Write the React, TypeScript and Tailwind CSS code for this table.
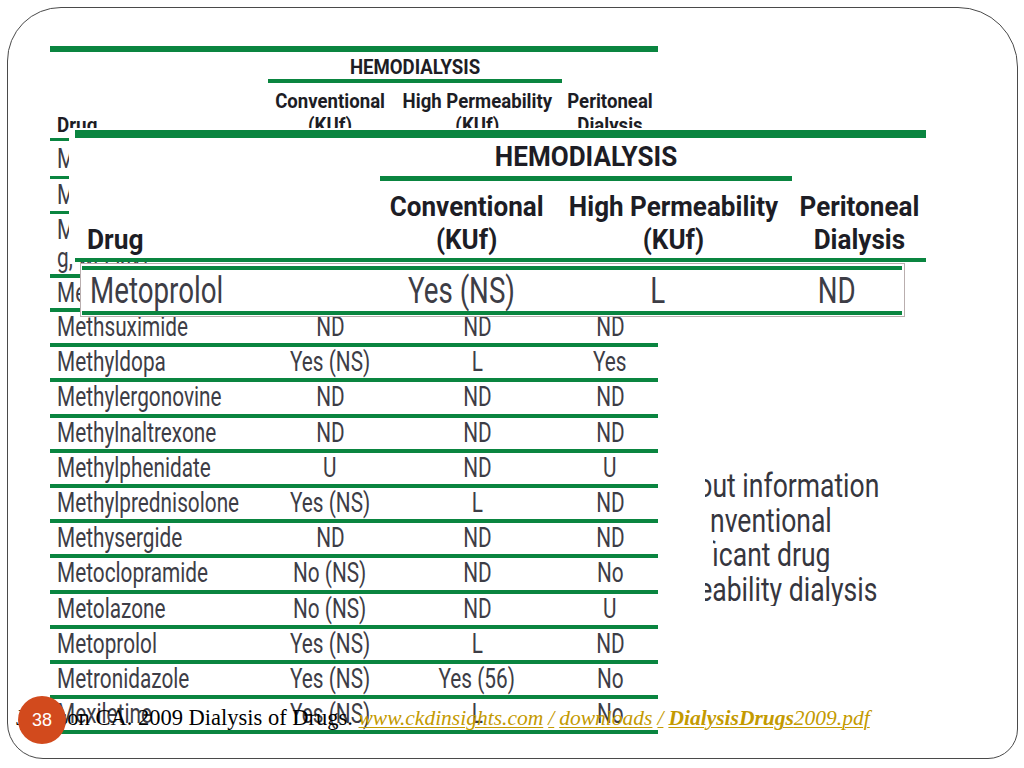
import React from 'react'

const NARROW = "font-['Roboto','Liberation_Sans',sans-serif]"

const ROWS = [
  ['Methsuximide', 'ND', 'ND', 'ND'],
  ['Methyldopa', 'Yes (NS)', 'L', 'Yes'],
  ['Methylergonovine', 'ND', 'ND', 'ND'],
  ['Methylnaltrexone', 'ND', 'ND', 'ND'],
  ['Methylphenidate', 'U', 'ND', 'U'],
  ['Methylprednisolone', 'Yes (NS)', 'L', 'ND'],
  ['Methysergide', 'ND', 'ND', 'ND'],
  ['Metoclopramide', 'No (NS)', 'ND', 'No'],
  ['Metolazone', 'No (NS)', 'ND', 'U'],
  ['Metoprolol', 'Yes (NS)', 'L', 'ND'],
  ['Metronidazole', 'Yes (NS)', 'Yes (56)', 'No'],
  ['Mexiletine', 'Yes (NS)', 'L', 'No'],
]

// rows above Methsuximide, mostly hidden under the zoomed header
const COVERED = [
  { lines: ['Metformin'], cells: ['ND', 'ND', 'ND'], cls: 'h-[38px] border-b-[3px]' },
  { lines: ['Methadone'], cells: ['Yes (NS)', 'L', 'ND'], cls: 'h-[35px] border-b-[3px]' },
  { lines: ['Methotrexate (low dose, <1', 'g, weekly)'], cells: ['Yes', 'Yes', 'No'], cls: 'h-[64px] border-b-4' },
  { lines: ['Methoxsalen'], cells: ['ND', 'ND', 'ND'], cls: 'h-[34px] border-b-4' },
]

// the source table is set in a condensed face; squeeze Roboto to match
function Sq({ children, left }: { children: React.ReactNode; left?: boolean }) {
  return (
    <span className={left ? 'inline-block origin-left scale-x-[0.77] whitespace-nowrap' : 'inline-block scale-x-[0.77] whitespace-nowrap'}>
      {children}
    </span>
  )
}

function Hd({ children, left }: { children: React.ReactNode; left?: boolean }) {
  return (
    <span className={left ? 'inline-block origin-left scale-x-[0.94] whitespace-nowrap' : 'inline-block scale-x-[0.93] whitespace-nowrap'}>
      {children}
    </span>
  )
}

function BaseTable() {
  return (
    <div className={`w-[608px] text-[#3d3d46] ${NARROW}`}>
      {/* header */}
      <div className="border-t-[6px] border-[#0a8540] text-[20px] font-bold text-[#1d1d25]">
        <div className="grid grid-cols-[218px_124px_170px_96px]">
          <div />
          <div className="col-span-2 h-[31px] border-b-4 border-[#0a8540] pt-[2px] text-center leading-[27px]"><Hd>HEMODIALYSIS</Hd></div>
          <div />
        </div>
        <div className="grid h-[58px] grid-cols-[218px_124px_170px_96px] items-end border-b-[3px] border-[#0a8540] pb-[1px] leading-[24px]">
          <div className="pl-[7px]"><Hd left>Drug</Hd></div>
          <div className="text-center"><Hd>Conventional<br />(KUf)</Hd></div>
          <div className="text-center"><Hd>High Permeability<br />(KUf)</Hd></div>
          <div className="text-center"><Hd>Peritoneal<br />Dialysis</Hd></div>
        </div>
      </div>

      {COVERED.map(r => (
        <div key={r.lines[0]} className={`grid grid-cols-[218px_124px_170px_96px] items-center border-[#0a8540] text-[27px] leading-[28px] ${r.cls}`}>
          <div className="pl-[7px]">
            {r.lines.map(l => <div key={l}><Sq left>{l}</Sq></div>)}
          </div>
          {r.cells.map((c, i) => <div key={i} className="text-center"><Sq>{c}</Sq></div>)}
        </div>
      ))}

      {ROWS.map(([drug, a, b, c]) => (
        <div key={drug} className="grid h-[35.2px] grid-cols-[218px_124px_170px_96px] items-center border-b-4 border-[#0a8540] text-[27px] leading-none">
          <div className="pl-[7px]"><Sq left>{drug}</Sq></div>
          <div className="text-center"><Sq>{a}</Sq></div>
          <div className="text-center"><Sq>{b}</Sq></div>
          <div className="text-center"><Sq>{c}</Sq></div>
        </div>
      ))}
    </div>
  )
}

function ZoomedHeader() {
  return (
    <div className={`absolute left-[61px] top-[120px] bg-white pl-[6px] pt-[2px] ${NARROW}`}>
      <div className="w-[851px] border-t-[8px] border-[#0a8540] text-[28px] font-bold text-[#1d1d25]">
        <div className="grid grid-cols-[305px_174px_238px_134px]">
          <div />
          <div className="col-span-2 h-[43px] border-b-[5px] border-[#0a8540] text-center leading-[38px]"><Hd>HEMODIALYSIS</Hd></div>
          <div />
        </div>
        <div className="grid h-[81px] grid-cols-[305px_174px_238px_134px] items-end border-b-4 border-[#0a8540] pb-[2px] leading-[33px]">
          <div className="pl-[12px]"><Hd left>Drug</Hd></div>
          <div className="text-center"><Hd>Conventional<br />(KUf)</Hd></div>
          <div className="text-center"><Hd>High Permeability<br />(KUf)</Hd></div>
          <div className="text-center"><Hd>Peritoneal<br />Dialysis</Hd></div>
        </div>
      </div>
    </div>
  )
}

function ZoomedRow() {
  return (
    <div className={`absolute left-[72px] top-[255px] h-[54px] w-[825px] border border-[#b9aeae] bg-white pb-[1px] pl-[1px] pr-[2px] pt-[2px] ${NARROW}`}>
      <div className="grid h-[49px] grid-cols-[296px_166px_228px_130px] items-center border-y-4 border-[#0a8540] text-[36px] leading-none text-[#3d3d46]">
        <div className="pl-[8px]"><Sq left>Metoprolol</Sq></div>
        <div className="text-center"><Sq>Yes (NS)</Sq></div>
        <div className="text-center"><Sq>L</Sq></div>
        <div className="text-center"><Sq>ND</Sq></div>
      </div>
    </div>
  )
}

export default function App() {
  return (
    <div className="h-[768px] w-[1024px] overflow-hidden bg-white p-[7px]">
      <div className="relative h-[752px] w-[1011px] rounded-tl-[54px] rounded-tr-[60px] rounded-bl-[36px] rounded-br-[30px] border border-[#4a4a4a]">
        <div className="flex items-start">
          <div className="ml-[37px] mt-[38px] w-[660px] bg-white pl-[5px]">
            <BaseTable />
          </div>
          <div className={`mt-[460px] w-[230px] text-[34px] leading-[34.5px] text-[#36363e] ${NARROW}`}>
            <div className="overflow-hidden">
              <div className="-ml-[37px] origin-left scale-x-[0.78] whitespace-nowrap">about information</div>
            </div>
            <div className="ml-[5px] overflow-hidden">
              <div className="-ml-[29px] origin-left scale-x-[0.78] whitespace-nowrap">conventional</div>
            </div>
            <div className="ml-[8px] overflow-hidden">
              <div className="-ml-[65px] origin-left scale-x-[0.78] whitespace-nowrap">significant drug</div>
            </div>
            <div className="overflow-hidden">
              <div className="-ml-[68px] origin-left scale-x-[0.78] whitespace-nowrap">permeability dialysis</div>
            </div>
          </div>
        </div>

        <ZoomedHeader />
        <ZoomedRow />

        {/* citation */}
        <p className="absolute left-[8px] top-[698px] whitespace-nowrap font-['Liberation_Serif',serif] text-[22.5px] leading-[24px] text-black">
          Johnson CA. 2009 Dialysis of Drugs.{' '}
          <a href="#" className="text-[21.5px] italic text-[#c49a00] underline decoration-1 underline-offset-2">
            www.ckdinsights.com<span className="mx-[5px]">/</span>downloads<span className="mx-[5px]">/</span><b>DialysisDrugs</b>2009.pdf
          </a>
        </p>

        <div className="absolute left-[10px] top-[688px] flex h-[48px] w-[48px] items-center justify-center rounded-full bg-[#d24a1d] font-['Liberation_Sans',sans-serif] text-[18px] text-white">
          38
        </div>
      </div>
    </div>
  )
}
